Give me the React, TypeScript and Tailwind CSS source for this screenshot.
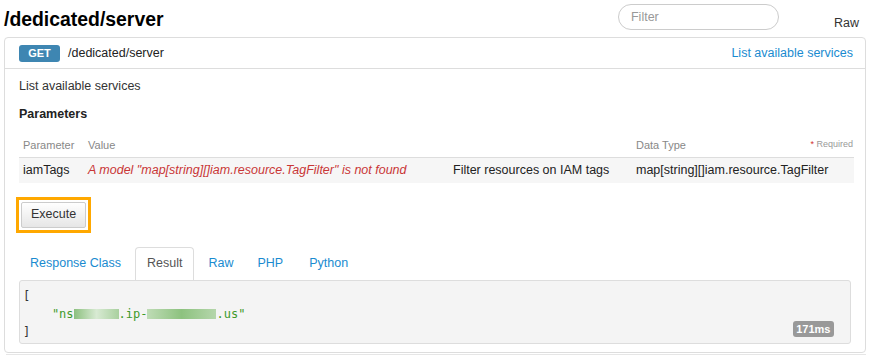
import React from "react";

const sans = { fontFamily: '"Liberation Sans", Arial, sans-serif' };

export default function App() {
  return (
    <div className="w-[874px] h-[356px] bg-white overflow-hidden text-[12.5px] text-[#333]" style={sans}>
      <div className="flex items-center h-[37px] pl-[4px]">
        <h1 className="text-[19.4px] font-bold text-black leading-none mt-[2px]">/dedicated/server</h1>
        <div className="ml-auto flex items-end">
          <input
            placeholder="Filter"
            className="w-[161px] h-[26px] rounded-full border border-[#ccc] px-[12px] text-[12.5px] placeholder:text-[#999] outline-none mb-[4px]"
            style={sans}
          />
          <span className="ml-[55px] mr-[15px] text-[12.5px] text-[#333] mb-[1px]">Raw</span>
        </div>
      </div>

      <div className="ml-[4px] w-[862px] border border-[#ddd] rounded-[4px]">
        <div className="flex items-center h-[31px] border-b border-[#ddd] pl-[14px] pr-[12px]">
          <span className="w-[41px] h-[17px] rounded-[3px] bg-[#3e86b2] text-white text-[11px] font-bold flex items-center justify-center">GET</span>
          <span className="ml-[8px] text-[12.5px] text-[#222]">/dedicated/server</span>
          <span className="ml-auto text-[#1a8bd0] text-[12.5px]">List available services</span>
        </div>

        <div className="px-[14px] pt-[10px] pb-[8px]">
          <div className="h-[15px] leading-[15px]">List available services</div>
          <div className="mt-[11px] font-bold text-[12.5px] text-[#222]">Parameters</div>

          <div className="mt-[11px] w-[835px]">
            <div className="flex items-center h-[23px] pb-[2px] text-[11px] text-[#888] border-b border-[#ddd]">
              <div className="w-[65px] pl-[4px]">Parameter</div>
              <div className="w-[365px] pl-[4px]">Value</div>
              <div className="w-[183px] pl-[4px]"></div>
              <div className="flex-1 pl-[4px]">Data Type</div>
              <div className="pr-[1px] text-[9px] text-[#999]"><span className="text-[#d12f2f]">*</span> Required</div>
            </div>
            <div className="flex items-center h-[25px] bg-[#f6f6f6] text-[12.5px] text-[#222]">
              <div className="w-[65px] pl-[4px]">iamTags</div>
              <div className="w-[365px] pl-[4px] italic text-[#c93636]">A model "map[string][]iam.resource.TagFilter" is not found</div>
              <div className="w-[183px] pl-[4px]">Filter resources on IAM tags</div>
              <div className="flex-1 pl-[4px]">map[string][]iam.resource.TagFilter</div>
            </div>
          </div>

          <div className="mt-[14px] ml-[-3px] inline-flex border-[3px] border-[#ffa800] p-[2px]">
            <button
              className="h-[26px] px-[9px] border border-[#ccc] rounded-[2px] bg-gradient-to-b from-white to-[#e6e6e6] text-[12.5px] text-[#333]"
              style={sans}
            >
              Execute
            </button>
          </div>

          <div className="mt-[14px] flex h-[33px] items-stretch">
            <div className="flex items-center pl-[11px] pr-[14px] text-[#1a8bd0]">Response Class</div>
            <div className="flex items-center px-[11px] text-[#555] border border-b-0 border-[#ddd] rounded-t-[4px] bg-white">Result</div>
            <div className="flex items-center px-[14px] text-[#1a8bd0]">Raw</div>
            <div className="flex items-center px-[13px] text-[#1a8bd0] ml-[-3px]">PHP</div>
            <div className="flex items-center px-[11px] ml-[2px] text-[#1a8bd0]">Python</div>
          </div>

          <div
            className="relative h-[64px] bg-[#f4f4f4] border border-[#ddd] rounded-[3px] px-[3px] pt-[6px] text-[12px] leading-[18px] text-[#333]"
            style={{ fontFamily: '"DejaVu Sans Mono", monospace' }}
          >
            <div>[</div>
            <div className="text-[#3d9a2b] whitespace-pre">
              {"    \"ns"}
              <span className="inline-block align-middle w-[45px] h-[10px] bg-gradient-to-r from-[#8cc07f] via-[#d8ead3] to-[#a9d09f]"></span>
              {".ip-"}
              <span className="inline-block align-middle w-[69px] h-[10px] bg-gradient-to-r from-[#bfdcb6] via-[#8dc27f] to-[#b5d6ab]"></span>
              {".us\""}
            </div>
            <div>]</div>
            <span
              className="absolute right-[16px] bottom-[6px] h-[16px] px-[3.5px] rounded-[3px] bg-[#999] text-white text-[11px] font-bold leading-[16px]"
              style={sans}
            >
              171ms
            </span>
          </div>
        </div>
      </div>
      <div className="ml-[6px] mt-[1px] w-[860px] border-t border-[#e6e6e6]"></div>
    </div>
  );
}
